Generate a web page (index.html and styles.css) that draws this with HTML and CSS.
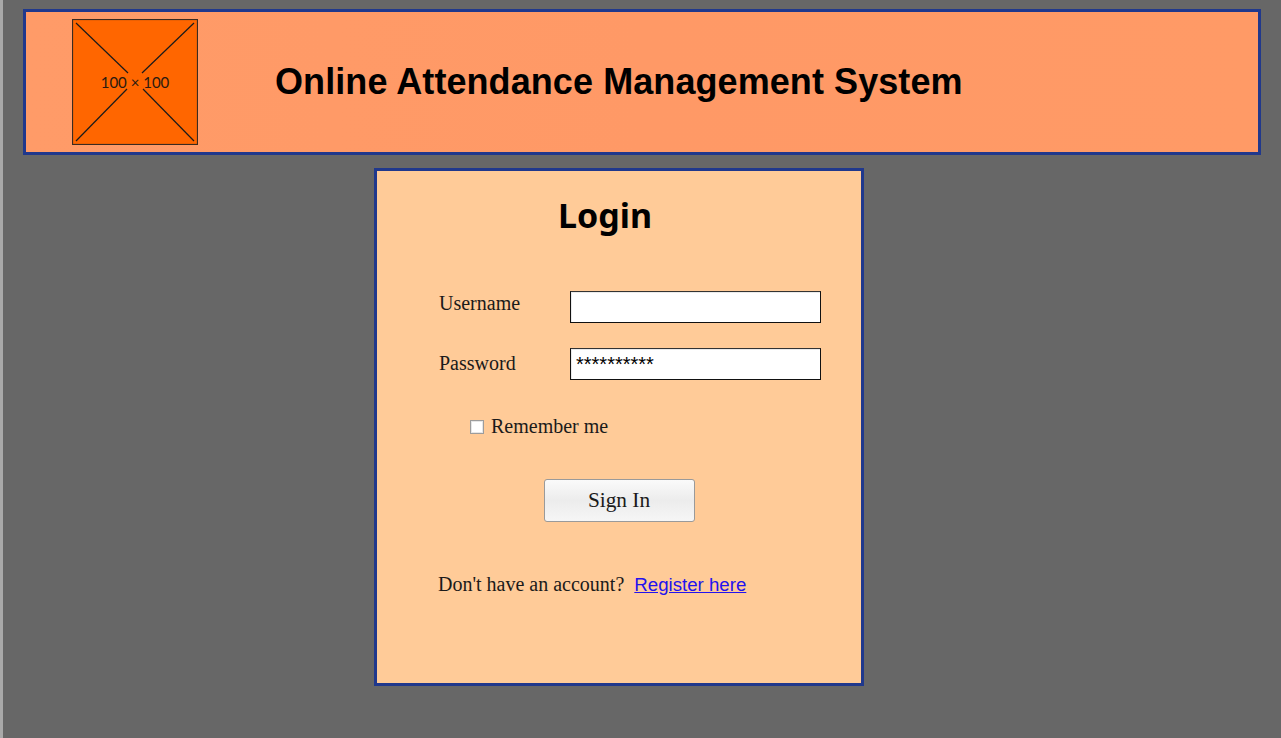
FILE: index.html
```html
<!DOCTYPE html>
<html lang="en">
<head>
<meta charset="utf-8">
<title>Online Attendance Management System</title>
<link rel="stylesheet" href="styles.css">
</head>
<body>
<div class="page">
  <header class="header">
    <svg class="logo" width="126" height="126" viewBox="0 0 126 126" aria-label="logo placeholder">
      <rect x="0.5" y="0.5" width="125" height="125" fill="#ff6600" stroke="#3a2a20" stroke-width="1.2"/>
      <line x1="4" y1="4" x2="56" y2="54" stroke="#1a1a1a" stroke-width="1.2"/>
      <line x1="122" y1="4" x2="70" y2="54" stroke="#1a1a1a" stroke-width="1.2"/>
      <line x1="55" y1="70" x2="4" y2="122" stroke="#1a1a1a" stroke-width="1.2"/>
      <line x1="71" y1="70" x2="122" y2="122" stroke="#1a1a1a" stroke-width="1.2"/>
      <text x="63" y="69" text-anchor="middle" class="logo-text">100 × 100</text>
    </svg>
    <h1 class="title">Online Attendance Management System</h1>
  </header>

  <section class="login">
    <h2 class="login-title">Login</h2>
    <form class="form">
      <div class="row">
        <label class="label" for="user">Username</label>
        <input class="field" id="user" type="text">
      </div>
      <div class="row row-2">
        <label class="label label-2" for="pass">Password</label>
        <input class="field" id="pass" type="text" value="**********">
      </div>
      <div class="remember">
        <input class="check" type="checkbox" id="rem">
        <label for="rem">Remember me</label>
      </div>
      <div class="actions">
        <button class="btn" type="button">Sign In</button>
      </div>
      <p class="register">Don't have an account?&nbsp; <a href="#" class="link">Register here</a></p>
    </form>
  </section>
</div>
</body>
</html>
```

FILE: styles.css
```css
html, body {
  margin: 0;
  padding: 0;
}
body {
  background: #676767;
  min-height: 738px;
  border-left: 3px solid #a9a9a9;
  font-family: "Liberation Serif", "Times New Roman", serif;
  color: #1a1a1a;
}
.page {
  padding: 9px 20px 0 20px;
}
.header {
  box-sizing: border-box;
  height: 146px;
  border: 3px solid #20388c;
  background: linear-gradient(90deg, #ff9b68 0%, #ff9966 50%, #ff9a66 100%);
  display: flex;
  align-items: center;
}
.logo {
  margin-left: 46px;
  flex: none;
  display: block;
}
.logo-text {
  font-family: Lato, "DejaVu Sans", sans-serif;
  font-size: 15px;
  fill: #2a1a10;
}
.title {
  margin: 0 0 0 77px;
  font-family: "Liberation Sans", Arial, sans-serif;
  font-weight: bold;
  font-size: 36px;
  letter-spacing: 0.08px;
  color: #000;
}
.login {
  box-sizing: border-box;
  margin: 13px 0 0 351px;
  width: 490px;
  height: 518px;
  border: 3px solid #20388c;
  background: #ffcb98;
  padding-top: 24px;
}
.login-title {
  margin: 0;
  padding-right: 28px;
  text-align: center;
  font-family: "Noto Sans", "Open Sans", sans-serif;
  font-weight: bold;
  font-size: 34px;
  line-height: 40px;
  color: #000;
}
.form {
  margin: 56px 0 0 0;
  display: flex;
  flex-direction: column;
}
.row {
  display: flex;
  align-items: center;
  margin-left: 62px;
  height: 32px;
}
.row-2 {
  margin-top: 25px;
}
.label {
  width: 131px;
  font-size: 20px;
  margin-bottom: 7px;
}
.label-2 {
  margin-bottom: 2px;
}
.field {
  box-sizing: border-box;
  width: 251px;
  height: 32px;
  margin: 0;
  border: 1px solid #111;
  border-top-color: #333;
  background: #fff;
  padding: 0 5px;
  font-family: "Liberation Sans", Arial, sans-serif;
  font-size: 20px;
  color: #000;
  box-shadow: inset 1px 1px 0 rgba(0,0,0,0.08);
}
.remember {
  display: flex;
  align-items: center;
  margin: 35px 0 0 93px;
  font-size: 20px;
}
.check {
  -webkit-appearance: none;
  appearance: none;
  box-sizing: border-box;
  width: 14px;
  height: 14px;
  margin: 0 7px 0 0;
  border: 1px solid #9c9c9c;
  background: #fff;
  box-shadow: inset 0 0 0 1px #e6e6e6;
}
.actions {
  display: flex;
  justify-content: center;
  margin-top: 41px;
}
.btn {
  box-sizing: border-box;
  width: 151px;
  height: 43px;
  border: 1px solid #9a9a9a;
  border-radius: 3px;
  background: linear-gradient(180deg, #fafafa 0%, #ececec 50%, #f6f6f6 100%);
  font-family: "Liberation Serif", "Times New Roman", serif;
  font-size: 21.33px;
  color: #1a1a1a;
  padding: 0;
}
.register {
  margin: 51px 0 0 61px;
  font-size: 20px;
}
.link {
  font-family: "Liberation Sans", Arial, sans-serif;
  font-size: 18.67px;
  color: #2312ee;
}
```
